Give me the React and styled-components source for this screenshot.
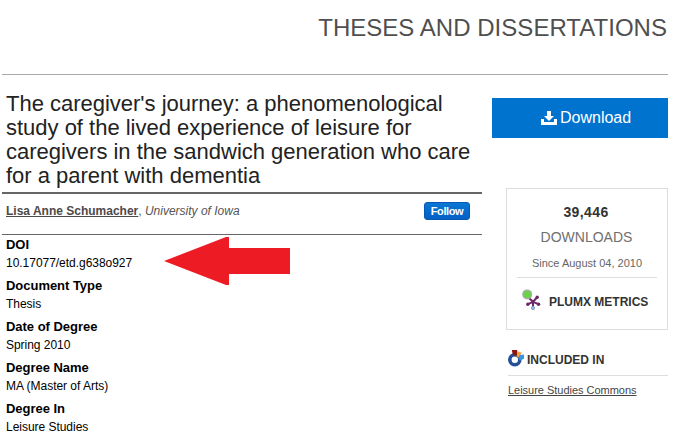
import React from 'react';
import styled, { createGlobalStyle } from 'styled-components';

const GlobalStyle = createGlobalStyle`
  * {
    box-sizing: border-box;
  }

  body {
    margin: 0;
    background: #fff;
    font-family: Arial, 'Liberation Sans', sans-serif;
    overflow: hidden;
  }

  h1, h2, h3, h4, p, dl, dt, dd {
    margin: 0;
  }
`;

const Page = styled.div`
  position: relative;
  width: 673px;
  height: 435px;
  padding: 0 5px 0 2px;
  overflow: hidden;
`;

const Header = styled.header`
  height: 75px;
  padding-top: 14px;
  border-bottom: 1px solid #a9a9a9;
`;

const SeriesTitle = styled.h2`
  padding-right: 1px;
  font-size: 24px;
  font-weight: 400;
  line-height: 28px;
  letter-spacing: 0.03px;
  text-align: right;
  white-space: nowrap;
  color: #4f4f4f;
`;

const Content = styled.div`
  display: flex;
  justify-content: space-between;
`;

const Main = styled.main`
  width: 480px;
  padding-top: 17px;
`;

const Title = styled.h1`
  height: 100px;
  padding-left: 4px;
  font-size: 22px;
  font-weight: 400;
  line-height: 24px;
  letter-spacing: -0.01px;
  white-space: nowrap;
  color: #222;
`;

// author row between the two rules
const AuthorRow = styled.div`
  display: flex;
  justify-content: space-between;
  height: 43px;
  padding: 8px 12px 0 4px;
  border-top: 2px solid #666;
  border-bottom: 1px solid #666;
`;

const Author = styled.p`
  font-size: 12px;
  line-height: 18px;
  color: #555;
`;

const AuthorLink = styled.a`
  font-weight: 700;
  text-decoration: underline;
  color: #4d4949;
`;

const FollowButton = styled.button`
  width: 46px;
  height: 18px;
  padding: 0;
  border: 1px solid #0659b4;
  border-radius: 3px;
  background: linear-gradient(#0877d3, #0560c5);
  font: 700 11px/16px Arial, 'Liberation Sans', sans-serif;
  letter-spacing: -0.4px;
  color: #fff;
`;

const Details = styled.dl`
  padding: 2px 0 0 4px;
  color: #000;
`;

const Field = styled.div`
  height: 41px;
`;

const Label = styled.dt`
  font-size: 13px;
  font-weight: 700;
  line-height: 16px;
  letter-spacing: -0.03px;
`;

const Value = styled.dd`
  padding-top: 2px;
  font-size: 12px;
  line-height: 16px;
  letter-spacing: -0.03px;
`;

const Sidebar = styled.aside`
  display: flex;
  flex-direction: column;
  align-items: flex-end;
  width: 176px;
  padding-top: 23px;
`;

const DownloadButton = styled.a`
  display: flex;
  align-items: center;
  gap: 3px;
  width: 176px;
  height: 40px;
  padding-left: 49px;
  background: #0073cf;
  font-size: 16px;
  color: #fff;
`;

const StatsCard = styled.section`
  width: 162px;
  height: 142px;
  margin-top: 50px;
  padding: 14px 10px 0;
  border: 1px solid #ddd;
  text-align: center;
`;

const Count = styled.p`
  padding-right: 2px;
  font-size: 14px;
  font-weight: 700;
  line-height: 18px;
  letter-spacing: 0.4px;
  color: #333;
`;

const CountLabel = styled.p`
  padding-top: 7px;
  padding-right: 1px;
  font-size: 14px;
  line-height: 18px;
  color: #707070;
`;

const Since = styled.p`
  height: 32px;
  padding-top: 10px;
  border-bottom: 1px solid #ddd;
  font-size: 11px;
  line-height: 14px;
  color: #666;
`;

const PlumRow = styled.div`
  display: flex;
  gap: 8px;
  padding: 11px 0 0 5px;
`;

const PlumText = styled.span`
  padding-top: 4px;
  font-size: 12px;
  font-weight: 700;
  line-height: 18px;
  white-space: nowrap;
  color: #333;
`;

const Included = styled.section`
  width: 160px;
  padding-top: 19px;
`;

const IncludedHeading = styled.h4`
  display: flex;
  gap: 3px;
  height: 27px;
  border-bottom: 1px solid #ddd;
  font-size: 12px;
  line-height: 22px;
  color: #333;
`;

const CommonsLink = styled.a`
  display: block;
  padding-top: 7px;
  font-size: 11px;
  line-height: 15px;
  letter-spacing: -0.02px;
  text-decoration: underline;
  white-space: nowrap;
  color: #444;
`;

// red arrow drawn over the record, pointing at the DOI
const Arrow = styled.svg`
  position: absolute;
  left: 164px;
  top: 237px;
`;

const TITLE_LINES = [
  "The caregiver's journey: a phenomenological",
  'study of the lived experience of leisure for',
  'caregivers in the sandwich generation who care',
  'for a parent with dementia',
];

const FIELDS = [
  { label: 'DOI', value: '10.17077/etd.g638o927' },
  { label: 'Document Type', value: 'Thesis' },
  { label: 'Date of Degree', value: 'Spring 2010' },
  { label: 'Degree Name', value: 'MA (Master of Arts)' },
  { label: 'Degree In', value: 'Leisure Studies' },
];

const DownloadIcon = () => (
  <svg width="16" height="14" viewBox="0 0 16 14" fill="#fff">
    <path d="M6 0h4v5h3l-5 5-5-5h3z" />
    <path d="M0 8h3v3h10V8h3v6H0z" />
  </svg>
);

const PlumIcon = () => (
  <svg width="19" height="22" viewBox="0 0 19 22">
    <g stroke="#6b2a67" strokeWidth="2" strokeLinecap="round">
      <path d="M11 12.8 7 9M11 12.8l4-4.3M11 12.8l-5 2.4M11 12.8l5.5 2.4M11 13v5" />
    </g>
    <g fill="#6b2a67">
      <circle cx="15.2" cy="8.3" r="1.7" />
      <circle cx="5.8" cy="15.3" r="1.7" />
      <circle cx="16.6" cy="15.3" r="1.7" />
    </g>
    <circle cx="5.2" cy="5.4" r="4.4" fill="#6bd14c" stroke="#aaa" strokeWidth="1.2" />
    <circle cx="11" cy="19" r="1.7" fill="#83c3ef" stroke="#8292ac" strokeWidth=".8" />
  </svg>
);

const CommonsIcon = () => (
  <svg width="16" height="18" viewBox="0 0 16 18">
    <circle cx="6.8" cy="10.8" r="5" fill="none" stroke="#24509a" strokeWidth="3.6" />
    <path d="M3.8 1h5.4v4.8L7.6 7.2 4.8 5.5z" fill="#8d160c" />
    <path d="m9.6 2.2 4.2 1.6-3.2 5-2-1.6z" fill="#f0a040" />
    <path d="m12 6 4-.5v4.2l-4 1.8-1.6-2.2z" fill="#3796df" />
  </svg>
);

const App = () => (
  <>
    <GlobalStyle />
    <Page>
      <Header>
        <SeriesTitle>THESES AND DISSERTATIONS</SeriesTitle>
      </Header>
      <Content>
        <Main>
          <Title>
            {TITLE_LINES.map((line) => (
              <div key={line}>{line}</div>
            ))}
          </Title>
          <AuthorRow>
            <Author>
              <AuthorLink>Lisa Anne Schumacher</AuthorLink>, <em>University of Iowa</em>
            </Author>
            <FollowButton>Follow</FollowButton>
          </AuthorRow>
          <Details>
            {FIELDS.map(({ label, value }) => (
              <Field key={label}>
                <Label>{label}</Label>
                <Value>{value}</Value>
              </Field>
            ))}
          </Details>
        </Main>
        <Sidebar>
          <DownloadButton>
            <DownloadIcon />
            <span>Download</span>
          </DownloadButton>
          <StatsCard>
            <Count>39,446</Count>
            <CountLabel>DOWNLOADS</CountLabel>
            <Since>Since August 04, 2010</Since>
            <PlumRow>
              <PlumIcon />
              <PlumText>PLUMX METRICS</PlumText>
            </PlumRow>
          </StatsCard>
          <Included>
            <IncludedHeading>
              <CommonsIcon />
              INCLUDED IN
            </IncludedHeading>
            <CommonsLink>Leisure Studies Commons</CommonsLink>
          </Included>
        </Sidebar>
      </Content>
      <Arrow width="126" height="48" viewBox="0 0 126 48">
        <path d="M0 24 62 0h3v11h61v26H65v11h-3z" fill="#ed1c24" />
      </Arrow>
    </Page>
  </>
);

export default App;
